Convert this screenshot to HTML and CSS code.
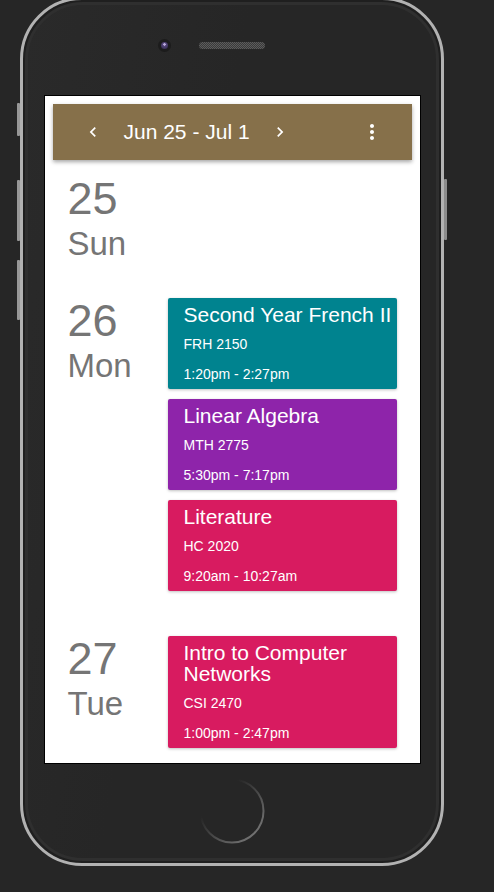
FILE: index.html
```html
<!DOCTYPE html>
<html lang="en">
<head>
<meta charset="utf-8">
<title>Schedule</title>
<link rel="stylesheet" href="styles.css">
</head>
<body>
<div class="phone">
  <span class="side-btn btn-mute"></span>
  <span class="side-btn btn-vol-up"></span>
  <span class="side-btn btn-vol-down"></span>
  <span class="side-btn btn-power"></span>
  <div class="bezel">
    <div class="top-area">
      <span class="camera"><span class="lens"></span></span>
      <span class="speaker"></span>
      <span></span>
    </div>
    <div class="screen">
      <header class="appbar">
        <svg class="icon-sm" viewBox="0 0 24 24"><path d="M15.41 7.41L14 6l-6 6 6 6 1.41-1.41L10.83 12z"/></svg>
        <span class="range">Jun 25 - Jul 1</span>
        <svg class="icon-sm next" viewBox="0 0 24 24"><path d="M10 6L8.59 7.41 13.17 12l-4.58 4.59L10 18l6-6z"/></svg>
        <svg class="icon-md more" viewBox="0 0 24 24"><path d="M12 8c1.1 0 2-.9 2-2s-.9-2-2-2-2 .9-2 2 .9 2 2 2zm0 2c-1.1 0-2 .9-2 2s.9 2 2 2 2-.9 2-2-.9-2-2-2zm0 6c-1.1 0-2 .9-2 2s.9 2 2 2 2-.9 2-2-.9-2-2-2z"/></svg>
      </header>
      <div class="agenda">
        <section class="day">
          <div class="date"><div class="num">25</div><div class="dow">Sun</div></div>
          <div class="events"></div>
        </section>
        <section class="day">
          <div class="date"><div class="num">26</div><div class="dow">Mon</div></div>
          <div class="events">
            <div class="card teal">
              <div class="title">Second Year French II</div>
              <div class="line">FRH 2150</div>
              <div class="line">1:20pm - 2:27pm</div>
            </div>
            <div class="card purple">
              <div class="title">Linear Algebra</div>
              <div class="line">MTH 2775</div>
              <div class="line">5:30pm - 7:17pm</div>
            </div>
            <div class="card pink">
              <div class="title">Literature</div>
              <div class="line">HC 2020</div>
              <div class="line">9:20am - 10:27am</div>
            </div>
          </div>
        </section>
        <section class="day">
          <div class="date"><div class="num">27</div><div class="dow">Tue</div></div>
          <div class="events">
            <div class="card pink">
              <div class="title">Intro to Computer Networks</div>
              <div class="line">CSI 2470</div>
              <div class="line">1:00pm - 2:47pm</div>
            </div>
          </div>
        </section>
      </div>
    </div>
    <div class="bottom-area">
      <svg class="home" viewBox="0 0 66 66">
        <defs>
          <linearGradient id="hg" x1="0" y1="0" x2="1" y2="1">
            <stop offset="0.3" stop-color="#262626"/>
            <stop offset="0.8" stop-color="#6a6a6a"/>
            <stop offset="1" stop-color="#808080"/>
          </linearGradient>
        </defs>
        <circle cx="33" cy="33" r="31.5" fill="none" stroke="url(#hg)" stroke-width="2"/>
      </svg>
    </div>
  </div>
</div>
</body>
</html>
```
FILE: styles.css
```css
html, body {
  margin: 0;
  padding: 0;
}
body {
  width: 494px;
  height: 892px;
  overflow: hidden;
  background: #262626;
  font-family: "Liberation Sans", Arial, sans-serif;
}
.phone {
  position: relative;
  box-sizing: border-box;
  width: 424px;
  height: 869px;
  margin: -3px 0 0 20px;
  border: 3px solid #b2b2b2;
  border-radius: 62px;
  background: #1f1f1f;
}
.side-btn {
  position: absolute;
  width: 3px;
  background: #979797;
  border-radius: 1px;
}
.btn-mute { left: -6px; top: 103px; height: 33px; }
.btn-vol-up { left: -6px; top: 180px; height: 61px; }
.btn-vol-down { left: -6px; top: 260px; height: 60px; }
.btn-power { right: -6px; top: 179px; height: 61px; background: #8c8c8c; }
.bezel {
  box-sizing: border-box;
  height: calc(100% - 4px);
  margin: 2px;
  border: 3px solid #2f2f2f;
  border-radius: 58px;
  background: linear-gradient(100deg, #2a2a2a 0%, #262626 40%, #262626 100%);
  display: flex;
  flex-direction: column;
  align-items: center;
}
.top-area {
  width: 100%;
  height: 90px;
  box-sizing: border-box;
  padding-top: 34px;
  display: grid;
  grid-template-columns: 1fr auto 1fr;
  align-items: center;
  align-content: start;
}
.camera {
  justify-self: end;
  margin-right: 28px;
  width: 13px;
  height: 13px;
  border-radius: 50%;
  background: #1c1c1c;
  display: flex;
  align-items: center;
  justify-content: center;
}
.lens {
  width: 7px;
  height: 7px;
  border-radius: 50%;
  background: radial-gradient(circle at 50% 35%, #b9a8d8 0 1px, #54467a 1.5px, #2f2748 100%);
}
.speaker {
  width: 66px;
  height: 7px;
  border-radius: 4px;
  background: repeating-conic-gradient(#5c5c5c 0 25%, #3a3a3a 0 50%) 0 0 / 2px 2px;
}
.screen {
  box-sizing: border-box;
  width: 377px;
  height: 669px;
  flex: none;
  border: 1px solid #000;
  background: #fff;
  overflow: hidden;
}
.appbar {
  margin: 8px 8px 0;
  height: 56px;
  box-sizing: border-box;
  padding: 0 28px 0 30px;
  background: #86704a;
  color: #fff;
  display: flex;
  align-items: center;
  box-shadow: 0 2px 4px rgba(0, 0, 0, 0.35);
}
.icon-sm {
  width: 20px;
  height: 20px;
  fill: #fff;
  flex: none;
}
.icon-md {
  width: 24px;
  height: 24px;
  fill: #fff;
  flex: none;
}
.range {
  margin-left: 21px;
  font-size: 21px;
  line-height: 24px;
}
.next { margin-left: 20px; }
.more { margin-left: auto; }
.agenda {
  padding-top: 16px;
}
.day {
  display: flex;
  align-items: flex-start;
  margin-bottom: 35px;
}
.date {
  width: 100px;
  margin-left: 23px;
  flex: none;
  color: #757575;
}
.num {
  font-size: 45px;
  line-height: 45px;
}
.dow {
  margin-top: 3px;
  font-size: 33px;
  line-height: 39px;
}
.events {
  width: 229px;
}
.card {
  box-sizing: border-box;
  padding: 6px 0 0 16px;
  margin-bottom: 10px;
  border-radius: 2px;
  color: #fff;
  box-shadow: 0 1px 3px rgba(0, 0, 0, 0.25);
}
.teal { background: #00838f; }
.purple { background: #8e24aa; }
.pink { background: #d81b60; }
.title {
  font-size: 21px;
  line-height: 21px;
}
.line {
  font-size: 14px;
  line-height: 30px;
}
.title + .line { margin-top: 4px; }
.bottom-area {
  padding-top: 14px;
}
.home {
  display: block;
  width: 66px;
  height: 66px;
}
```
